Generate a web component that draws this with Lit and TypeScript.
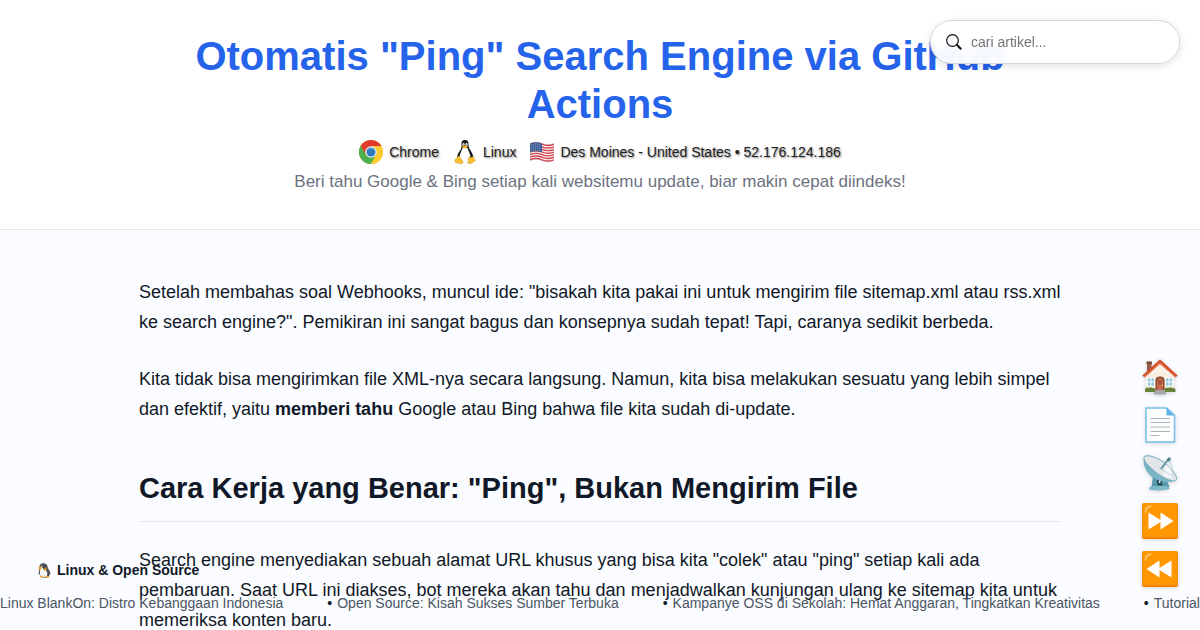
import { LitElement, html, css, svg } from "lit";
import { customElement } from "lit/decorators.js";

const chrome = html`<svg viewBox="0 0 48 48" aria-hidden="true">
  <circle cx="24" cy="24" r="24" fill="#fbc116" />
  <path d="M3.200 12A24 24 0 0 1 44.800 12L24 13 14 30Z" fill="#e23b2e" />
  <path d="M3.200 12A24 24 0 0 0 24 48L34 29.500 24 35 14 30Z" fill="#4caf50" />
  <path d="M24 48A24 24 0 0 0 44.800 12H24L34 29.500Z" fill="#fccb2f" />
  <circle cx="24" cy="24" r="11.500" fill="#f1f3f4" />
  <circle cx="24" cy="24" r="9" fill="#2c7cc4" />
  <path d="M17 20a8 8 0 0 1 14 0q-7-4-14 0z" fill="#67aee3" />
</svg>`;

const tux = html`<svg viewBox="0 0 48 48" aria-hidden="true">
  <path d="M24 0c-6 0-7 4-7 9 .3 6 0 8-3 12-4 5-6 11-6 16 1 5 7 8 16 8s16-2 17-8c0-6-3-12-6-16-3-5-4-7-4-13 0-5-2-8-7-8z" fill="#18191b" />
  <path d="M19 16c-2 7-6 12-6 19 0 6 5 11 11 11 7 0 11-5 11-11 0-7-4-12-6-19z" fill="#fff" />
  <ellipse cx="21" cy="9" rx="2.300" ry="3.200" fill="#fff" />
  <ellipse cx="27" cy="9" rx="2.300" ry="3.200" fill="#fff" />
  <circle cx="21.500" cy="10" r="1.200" fill="#111" />
  <circle cx="26.500" cy="10" r="1.200" fill="#111" />
  <path d="M18 13q6-4 12 0-5 5-7 4-3-1-5-4z" fill="#f9b21b" />
  <path d="M12 32l7 10c2 4-1 6-5 5l-9-2c-2-1-1-3-1-5 0-3 3-2 4-4 1-1 2-4 4-4z" fill="#fbc02d" stroke="#c98f14" />
  <path d="M32 33c2 3 6 2 8 0 1 4 2 5 4 6 1 2 0 3-2 4l-6 4c-4 2-6-1-5-5z" fill="#fbc02d" stroke="#c98f14" />
</svg>`;

const flag = html`<svg viewBox="0 0 48 48" aria-hidden="true">
  <path d="M0 7q12-5 24 0t24 0v34q-12 5-24 0t-24 0z" fill="#f5f5f5" />
  ${[0, 1, 2, 3, 4, 5, 6].map(
    (i) => svg`<path d=${`M0 ${8.4 + i * 5.2}q12-5 24 0t24 0`} fill="none" stroke="#d5414b" stroke-width="2.700" />`
  )}
  <path d="M0 7q12-5 24 0v18q-12-5-24 0z" fill="#3b5b94" />
  <path d="M2 10q10-4 20 0M2 14q10-4 20 0M2 18q10-4 20 0M2 22q10-4 20 0" fill="none" stroke="#dfe6f2" stroke-width="1.500" stroke-dasharray="1.500 2.500" />
  <path d="M0 7q12-5 24 0t24 0v34q-12 5-24 0t-24 0z" fill="none" stroke="#8b8f99" stroke-opacity=".5" />
</svg>`;

const smallPenguin = html`<svg viewBox="0 0 48 48" aria-hidden="true">
  <path d="M20 1c-8 0-12 4-12 11 1 6-2 13-3 22l5 4c1 5 6 9 15 9 10 0 14-4 15-9l3-4c-1-10-8-14-9-21C33 5 28 1 20 1z" fill="#4b4e51" />
  <path d="M10 15c4-5 9 0 11 5 8 0 12 8 12 15 0 7-5 10-12 10-8 0-12-5-12-13 0-7 2-8 1-17z" fill="#f4f4f4" />
  <path d="M2 16l9-5 5 6-6 4zM20 21q8-3 11-8 2 9-7 13z" fill="#f5a623" />
  <path d="M9 43l9-2 5 5H10zM27 46l4-5 9 2-2 3z" fill="#f5a623" />
  <circle cx="15" cy="10" r="2" fill="#fff" />
</svg>`;

const house = html`<svg viewBox="0 0 72 72" aria-hidden="true">
  <path d="M10 6h9v27h-9z" fill="#9b5946" /><path d="M9 5h11v5H9z" fill="#7c4638" />
  <path d="M9 34L36 9l27 25v31H9z" fill="#faf0e3" />
  <path d="M36 1L1 33l4 4 31-27 31 27 4-4z" fill="#e4673b" />
  <path d="M36 1L1 33l2 2L36 5l33 30 2-2z" fill="#c94f2b" />
  <path d="M27 65V42q0-7 9-7t9 7v23z" fill="#87452f" />
  <path d="M30 63V43q0-5 6-5t6 5v20z" fill="#c5694c" />
  <path d="M33 43h6v8h-6z" fill="#a35138" /><circle cx="40" cy="53" r="1.500" fill="#ffd54f" />
  <path d="M11 38h14v15H11zM47 38h14v15H47z" fill="#fff" />
  <path d="M12 39h5v6h-5zM19 39h5v6h-5zM12 47h5v6h-5zM19 47h5v6h-5zM48 39h5v6h-5zM55 39h5v6h-5zM48 47h5v6h-5zM55 47h5v6h-5z" fill="#8dc9df" />
  <path d="M6 66v-6q3-5 7-2 5-3 8 0 4-2 6 3v5zM45 66v-6q3-5 7-2 5-3 8 0 4-2 7 3v5z" fill="#69813a" />
  <path d="M27 62h18v4h3v5H24v-5h3z" fill="#a5a9ab" />
</svg>`;

const page = html`<svg viewBox="0 0 72 72" aria-hidden="true">
  <path d="M8 2h41l16 15v53H8z" fill="#fff" stroke="#73c0e8" stroke-width="3" />
  <path d="M49 1l17 16H49z" fill="#5db4e4" />
  <path d="M17 23h39M17 31h39M17 40h39M17 49h39M17 57h18" stroke="#aab4ba" stroke-width="2" />
</svg>`;

const dish = html`<svg viewBox="0 0 72 72" aria-hidden="true">
  <path d="M22 42l-3 22h36l-4-10-16-5z" fill="#5798ac" />
  <path d="M29 47l2 14h10l-2-12z" fill="#264c58" /><path d="M34 50h3v6h-3z" fill="#d6f0f6" />
  <path d="M14 66q2-4 10-4h24q7 1 7 6-17 5-41 1z" fill="#7cb9ca" />
  <path d="M5 3C-1 15 8 39 27 48c18 9 36 7 41 1 2-2 0-4-2-5z" fill="#78b4c5" />
  <path d="M5 3C11-2 33 5 50 20c16 14 23 27 17 31-6 3-24-4-40-17C11 21 0 8 5 3z" fill="#e2e6e9" stroke="#72acbd" stroke-width="2" />
  <path d="M26 7l27 33M50 20q11 10 15 23-8 8-24-4z" fill="#f8fafb" opacity=".8" />
  <path d="M36 27L56 7 62 43M36 27l27 16" fill="none" stroke="#b6c7ce" stroke-width="1.500" />
  <path d="M38 28L53 8" stroke="#578e9c" stroke-width="3" /><path d="M49 10l5-6 4 3-4 7z" fill="#54818e" />
</svg>`;

const skip = (points: string) => html`<svg viewBox="0 0 72 72" aria-hidden="true">
  <rect width="72" height="72" rx="5" fill="#ef7d00" />
  <rect width="70" height="69" x="1" rx="5" fill="#ff9800" />
  <path d="M5 18Q6 5 18 5q3 0 0 3Q9 10 8 18q-2 3-3 0z" fill="#ffc675" />
  <path d=${points} fill="#fff" />
</svg>`;

const shortcuts = [
  { label: "Beranda", icon: house },
  { label: "Artikel", icon: page },
  { label: "RSS", icon: dish },
  { label: "Berikutnya", icon: skip("M13 19l24 15V19l26 17-26 17V38L13 53z") },
  { label: "Sebelumnya", icon: skip("M59 19L35 34V19L9 36l26 17V38l24 15z") },
];

const headlines = [
  "Linux BlankOn: Distro Kebanggaan Indonesia",
  "Open Source: Kisah Sukses Sumber Terbuka",
  "Kampanye OSS di Sekolah: Hemat Anggaran, Tingkatkan Kreativitas",
  "Tutorial Linux",
];

@customElement("app-root")
export class AppRoot extends LitElement {
  static styles = css`
    :host {
      display: block;
      position: relative;
      height: 100vh;
      overflow: hidden;
      background: #fafcff;
      color: #111827;
      font-family: "Liberation Sans", Arial, sans-serif;
      font-size: 18px;
      line-height: 30px;
    }
    * { box-sizing: border-box; }
    svg { display: block; width: 100%; height: 100%; }
    .header {
      padding: 32px 20px;
      background: #fff;
      border-bottom: 1px solid #e5e7eb;
      text-align: center;
    }
    .wrap { max-width: 922px; margin: 0 auto; }
    h1 { margin: 0 0 12px; color: #2563eb; font-size: 40px; line-height: 48px; }
    .visitor {
      display: flex;
      justify-content: center;
      gap: 14px;
      font-size: 14px;
      line-height: 24px;
      color: #222;
      text-shadow: 1px 1px 2px rgba(0, 0, 0, 0.5);
    }
    .fact { display: flex; gap: 6px; }
    .glyph { width: 24px; height: 24px; flex: none; }
    .tagline { margin: 0; padding-top: 2px; color: #6b7280; font-size: 17px; line-height: 31px; }
    .article { padding: 47px 20px 0; }
    p { margin: 0 0 27px; }
    h2 {
      margin: 0 0 23px;
      padding: 20px 0 15px;
      border-bottom: 1px solid #e5e7eb;
      font-size: 29px;
      line-height: 35px;
    }
    .search {
      position: absolute;
      top: 20px;
      right: 20px;
      display: flex;
      align-items: center;
      gap: 9px;
      width: 250px;
      height: 44px;
      padding: 0 16px 0 15px;
      border: 1px solid #d5d7da;
      border-radius: 22px;
      background: rgba(255, 255, 255, 0.92);
      box-shadow: 0 2px 8px rgba(0, 0, 0, 0.12);
      backdrop-filter: blur(4px);
    }
    .lens { width: 16px; height: 16px; flex: none; }
    .field {
      flex: 1;
      min-width: 0;
      padding: 0;
      border: 0;
      outline: 0;
      background: none;
      font: 14px "Liberation Sans", Arial, sans-serif;
    }
    .field::placeholder { color: #757575; opacity: 1; }
    .shortcuts {
      position: absolute;
      right: 22px;
      bottom: 43px;
      display: flex;
      flex-direction: column;
      gap: 12px;
    }
    .shortcut { display: block; width: 36px; height: 36px; filter: drop-shadow(0 1px 2px rgba(0, 0, 0, 0.15)); }
    .news { position: absolute; inset: auto 0 16px 0; overflow: hidden; line-height: 22px; }
    .topic { display: flex; align-items: center; gap: 5px; margin: 0 0 11px 37px; font-size: 14px; font-weight: bold; }
    .mini { width: 15px; height: 15px; }
    .ticker { display: flex; gap: 44px; margin: 0; padding: 0; list-style: none; white-space: nowrap; font-size: 14px; }
    .item { display: flex; gap: 5px; }
    .link { color: #4b5563; text-decoration: none; }
  `;

  render() {
    return html`
      <header class="header">
        <div class="wrap">
          <h1>Otomatis "Ping" Search Engine via GitHub Actions</h1>
          <div class="visitor">
            <span class="fact"><span class="glyph">${chrome}</span>Chrome</span>
            <span class="fact"><span class="glyph">${tux}</span>Linux</span>
            <span class="fact"><span class="glyph">${flag}</span>Des Moines - United States • 52.176.124.186</span>
          </div>
          <p class="tagline">Beri tahu Google &amp; Bing setiap kali websitemu update, biar makin cepat diindeks!</p>
        </div>
      </header>
      <main class="article">
        <div class="wrap">
          <p>Setelah membahas soal Webhooks, muncul ide: "bisakah kita pakai ini untuk mengirim file sitemap.xml atau rss.xml ke search engine?". Pemikiran ini sangat bagus dan konsepnya sudah tepat! Tapi, caranya sedikit berbeda.</p>
          <p>Kita tidak bisa mengirimkan file XML-nya secara langsung. Namun, kita bisa melakukan sesuatu yang lebih simpel dan efektif, yaitu <strong>memberi tahu</strong> Google atau Bing bahwa file kita sudah di-update.</p>
          <h2>Cara Kerja yang Benar: "Ping", Bukan Mengirim File</h2>
          <p>Search engine menyediakan sebuah alamat URL khusus yang bisa kita "colek" atau "ping" setiap kali ada pembaruan. Saat URL ini diakses, bot mereka akan tahu dan menjadwalkan kunjungan ulang ke sitemap kita untuk memeriksa konten baru.</p>
        </div>
      </main>
      <form class="search" role="search">
        <label class="lens" for="q" aria-label="Cari artikel">
          <svg viewBox="0 0 16 16" fill="none" stroke="#111">
            <circle cx="6.500" cy="6.500" r="5.800" stroke-width="1.200" />
            <path d="M10.800 10.800l4.400 4.400" stroke-width="2.200" />
          </svg>
        </label>
        <input class="field" id="q" type="text" placeholder="cari artikel..." />
      </form>
      <aside class="news">
        <div class="topic"><span class="mini">${smallPenguin}</span>Linux &amp; Open Source</div>
        <ul class="ticker">
          ${headlines.map(
            (text, i) => html`<li class="item">${i ? html`<span>•</span>` : ""}<a class="link" href="#">${text}</a></li>`
          )}
        </ul>
      </aside>
      <nav class="shortcuts">
        ${shortcuts.map((s) => html`<a class="shortcut" href="#" aria-label=${s.label}>${s.icon}</a>`)}
      </nav>
    `;
  }
}
